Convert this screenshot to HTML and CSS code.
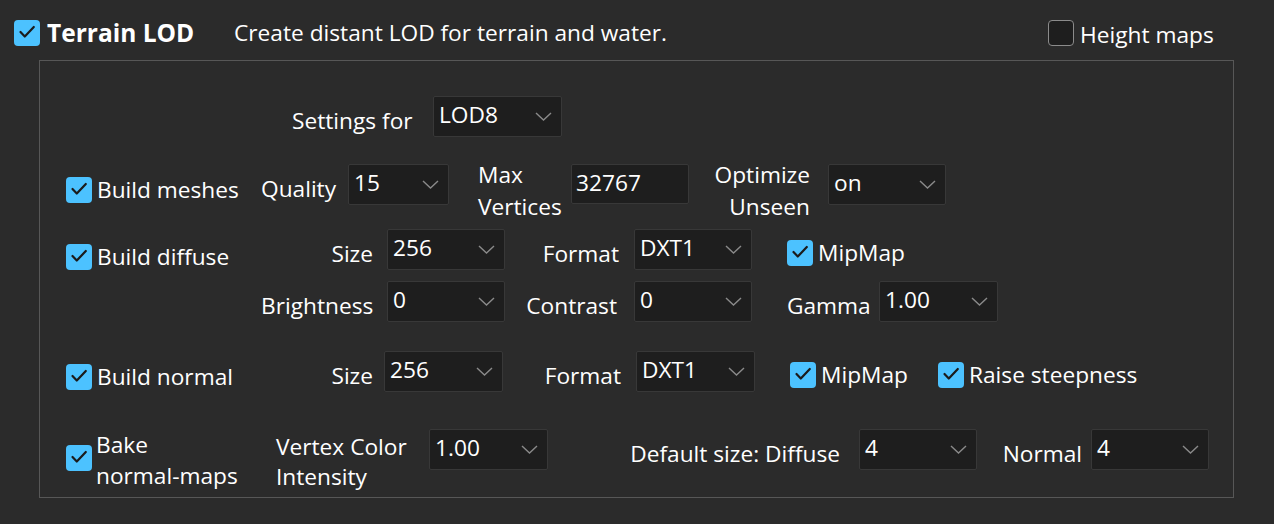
FILE: index.html
```html
<!DOCTYPE html>
<html>
<head>
<meta charset="utf-8">
<link rel="stylesheet" href="styles.css">
</head>
<body>
<svg width="0" height="0" class="defs">
  <defs>
    <symbol id="chev" viewBox="0 0 17 9"><polyline points="1,1 8.5,8 16,1" fill="none" stroke="#8a8a8a" stroke-width="1.4"/></symbol>
    <symbol id="tick" viewBox="0 0 26 26"><polyline points="6.5,12 10.8,16.5 19.8,7" fill="none" stroke="#1b1b1b" stroke-width="2.2" stroke-linecap="round" stroke-linejoin="round"/></symbol>
  </defs>
</svg>
<div class="header">
  <span class="cb on"><svg><use href="#tick"/></svg></span>
  <span class="title">Terrain LOD</span>
  <span class="desc">Create distant LOD for terrain and water.</span>
  <span class="hm"><span class="cb off"></span><span class="hm-text">Height maps</span></span>
</div>
<div class="panel">
  <div class="row r-settings">
    <span class="lbl w-settings">Settings for</span>
    <span class="dd w129"><span class="val">LOD8</span><svg class="chev"><use href="#chev"/></svg></span>
  </div>

  <div class="row r-meshes">
    <span class="chk w195"><span class="cb on"><svg><use href="#tick"/></svg></span><span>Build meshes</span></span>
    <span class="lbl w87">Quality</span>
    <span class="dd w101"><span class="val">15</span><svg class="chev"><use href="#chev"/></svg></span>
    <span class="lbl two w93 ml29">Max<br>Vertices</span>
    <span class="tb"><span class="val">32767</span></span>
    <span class="lbl two right w139 pr18">Optimize<br>Unseen</span>
    <span class="dd w118"><span class="val">on</span><svg class="chev"><use href="#chev"/></svg></span>
  </div>

  <div class="row-group r-diffuse">
    <span class="chk w195 top"><span class="cb on"><svg><use href="#tick"/></svg></span><span>Build diffuse</span></span>
    <div class="sub">
      <div class="row">
        <span class="lbl right w126 pr14">Size</span>
        <span class="dd w118"><span class="val">256</span><svg class="chev"><use href="#chev"/></svg></span>
        <span class="lbl right w129 pr15">Format</span>
        <span class="dd w118"><span class="val">DXT1</span><svg class="chev"><use href="#chev"/></svg></span>
        <span class="chk ml35 up"><span class="cb on"><svg><use href="#tick"/></svg></span><span>MipMap</span></span>
      </div>
      <div class="row r-sub2">
        <span class="lbl right w126 pr15">Brightness</span>
        <span class="dd w118"><span class="val">0</span><svg class="chev"><use href="#chev"/></svg></span>
        <span class="lbl right w129 pr17">Contrast</span>
        <span class="dd w118"><span class="val">0</span><svg class="chev"><use href="#chev"/></svg></span>
        <span class="lbl w92 ml35">Gamma</span>
        <span class="dd w119"><span class="val">1.00</span><svg class="chev"><use href="#chev"/></svg></span>
      </div>
    </div>
  </div>

  <div class="row r-normal">
    <span class="chk w195"><span class="cb on"><svg><use href="#tick"/></svg></span><span>Build normal</span></span>
    <span class="lbl right w123 pr11">Size</span>
    <span class="dd w119"><span class="val">256</span><svg class="chev"><use href="#chev"/></svg></span>
    <span class="lbl right w133 pr15">Format</span>
    <span class="dd w119"><span class="val">DXT1</span><svg class="chev"><use href="#chev"/></svg></span>
    <span class="chk ml35 w148 up"><span class="cb on"><svg><use href="#tick"/></svg></span><span>MipMap</span></span>
    <span class="chk up"><span class="cb on"><svg><use href="#tick"/></svg></span><span>Raise steepness</span></span>
  </div>

  <div class="row r-bake">
    <span class="chk w210 low"><span class="cb on"><svg><use href="#tick"/></svg></span><span class="two-b">Bake<br>normal-maps</span></span>
    <span class="lbl two-b w153">Vertex Color<br>Intensity</span>
    <span class="dd w119"><span class="val">1.00</span><svg class="chev"><use href="#chev"/></svg></span>
    <span class="lbl right w311 pr19">Default size: Diffuse</span>
    <span class="dd w118"><span class="val">4</span><svg class="chev"><use href="#chev"/></svg></span>
    <span class="lbl right w114 pr9">Normal</span>
    <span class="dd w118"><span class="val">4</span><svg class="chev"><use href="#chev"/></svg></span>
  </div>
</div>
</body>
</html>
```

FILE: styles.css
```css
html, body {
  margin: 0;
  padding: 0;
}
body {
  background: #2b2b2b;
  color: #ffffff;
  font-family: "Open Sans", "Noto Sans", sans-serif;
  font-size: 22.7px;
  width: 1274px;
  height: 524px;
  overflow: hidden;
}
.defs {
  position: absolute;
}

/* checkbox */
.cb {
  flex: none;
  width: 26px;
  height: 26px;
  box-sizing: border-box;
  border-radius: 4px;
  display: inline-block;
}
.cb svg {
  width: 26px;
  height: 26px;
  display: block;
}
.cb.on {
  background: #4cc2ff;
}
.cb.off {
  background: #1e1e1e;
  border: 1.5px solid #8b8b8b;
}

/* header */
.header {
  display: flex;
  align-items: center;
  height: 26px;
  padding: 20px 0 0 14px;
}
.title {
  font-weight: 700;
  font-size: 24.5px;
  width: 194px;
  padding-left: 7px;
  box-sizing: border-box;
  flex: none;
  line-height: 26px;
}
.desc {
  flex: 1;
  line-height: 26px;
}
.hm {
  flex: none;
  width: 226px;
  display: flex;
  align-items: center;
}
.hm-text {
  margin-left: 6px;
  padding-top: 3px;
  line-height: 26px;
}

/* panel */
.panel {
  margin: 14px 0 0 39px;
  width: 1195px;
  height: 438px;
  box-sizing: border-box;
  border: 1px solid #575757;
  padding: 35px 0 0 26px;
  display: flex;
  flex-direction: column;
}
.row {
  display: flex;
  align-items: center;
  height: 41px;
}
.row-group {
  display: flex;
  align-items: flex-start;
}
.sub {
  display: flex;
  flex-direction: column;
}
.r-meshes { margin-top: 27px; }
.r-diffuse { margin-top: 24px; }
.r-sub2 { margin-top: 11px; }
.r-normal { margin-top: 29px; }
.r-bake { margin-top: 37px; }

.lbl {
  flex: none;
  box-sizing: border-box;
  line-height: 30px;
  padding-top: 9px;
  white-space: nowrap;
}
.lbl.right { text-align: right; }
.lbl.two {
  line-height: 32px;
  padding-top: 13px;
}
.two-b {
  line-height: 30px;
}
.lbl.two-b {
  padding-top: 24px;
}

.chk {
  flex: none;
  display: flex;
  align-items: center;
  gap: 5px;
  margin-top: 10px;
  line-height: 30px;
  white-space: nowrap;
}
.chk > span:last-child {
  padding-top: 1px;
}
.chk.top {
  height: 41px;
  margin-top: 7px;
}
.chk.up { margin-top: 6px; }
.chk.low { margin-top: 17px; }
.chk.low > span:last-child {
  margin-left: -1px;
  padding-top: 3px;
  line-height: 31px;
}

/* dropdown */
.dd {
  flex: none;
  height: 41px;
  box-sizing: border-box;
  background: #1e1e1e;
  border: 1px solid #383838;
  border-radius: 2px;
  display: flex;
  align-items: center;
  justify-content: space-between;
  padding: 0 9px 4px 5px;
}
.val {
  line-height: 30px;
}
.chev {
  width: 17px;
  height: 9px;
  margin-top: 4px;
}
.tb {
  flex: none;
  align-self: flex-start;
  width: 118px;
  height: 40px;
  box-sizing: border-box;
  background: #1e1e1e;
  border: 1px solid #383838;
  border-radius: 2px;
  display: flex;
  align-items: center;
  padding: 0 0 3px 4px;
}

/* widths */
.w-settings { width: 141px; margin-left: 226px; }
.w87 { width: 87px; }
.w92 { width: 92px; }
.w93 { width: 93px; }
.w101 { width: 101px; }
.w114 { width: 114px; }
.w118 { width: 118px; }
.w119 { width: 119px; }
.w123 { width: 123px; }
.w126 { width: 126px; }
.w129 { width: 129px; }
.w133 { width: 133px; }
.w139 { width: 139px; }
.w148 { width: 148px; }
.w153 { width: 153px; }
.w195 { width: 195px; }
.w210 { width: 210px; }
.w311 { width: 311px; }
.ml29 { margin-left: 29px; }
.ml35 { margin-left: 35px; }
.pr9 { padding-right: 9px; }
.pr11 { padding-right: 11px; }
.pr14 { padding-right: 14px; }
.pr15 { padding-right: 15px; }
.pr17 { padding-right: 17px; }
.pr18 { padding-right: 18px; }
.pr19 { padding-right: 19px; }
```
